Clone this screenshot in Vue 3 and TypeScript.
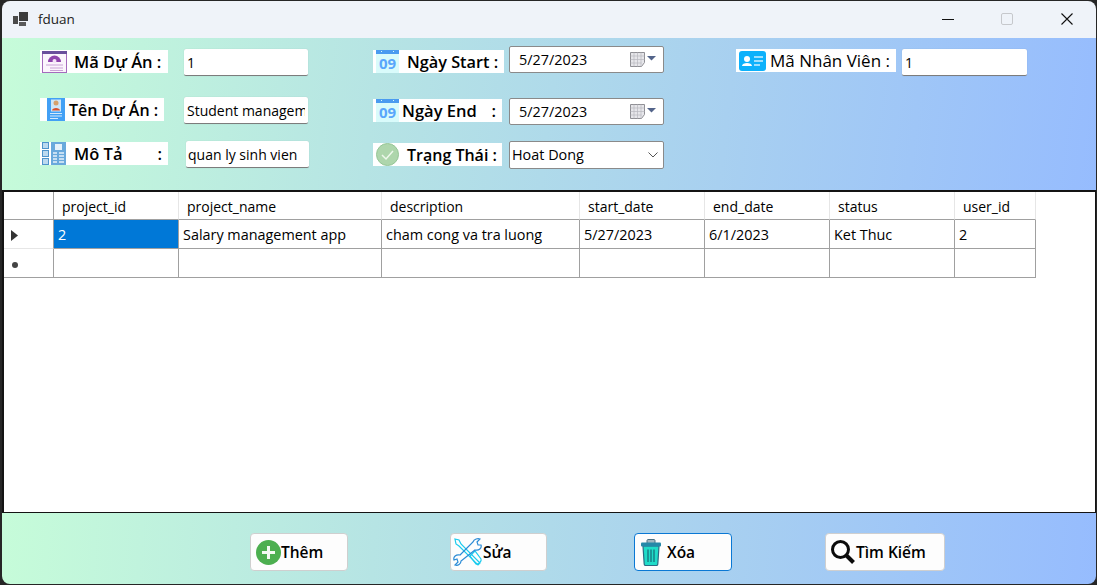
<template>
  <div class="window">
    <div class="shell">
      <div class="titlebar">
        <svg class="app-icon" width="16" height="16" viewBox="0 0 16 16">
          <rect x="0" y="5" width="5" height="8" fill="#4a4a4a" />
          <rect x="6" y="1" width="9" height="9" fill="#3c3c3c" />
          <rect x="6" y="11" width="7" height="4" fill="#5a5a5a" />
        </svg>
        <span class="title">fduan</span>
        <div class="win-controls">
          <svg class="win-btn" width="14" height="14" viewBox="0 0 14 14"><path d="M1 7.500h12" stroke="#111" stroke-width="1" /></svg>
          <svg class="win-btn btn-max" width="14" height="14" viewBox="0 0 14 14"><rect x="1.500" y="1.500" width="11" height="11" rx="1.500" fill="none" stroke="#c6c8cc" /></svg>
          <svg class="win-btn btn-close" width="14" height="14" viewBox="0 0 14 14"><path d="M1.500 1.500l11 11M12.500 1.500l-11 11" stroke="#111" stroke-width="1.100" /></svg>
        </div>
      </div>

      <div class="form-top">
        <div class="col col-a">
          <div class="field">
            <label class="lbl lbl-a1">
              <svg class="ic ic-proj" width="25" height="22" viewBox="0 0 25 22">
                <rect x="0.500" y="0.500" width="24" height="21" fill="#fbf5fc" stroke="#a56bbd" />
                <rect x="0" y="0" width="25" height="3" fill="#6a4f9c" />
                <path d="M6 11a6.500 6.500 0 0 1 13 0z" fill="#8e44ad" />
                <circle cx="12.500" cy="10" r="2" fill="#f3e4f6" />
                <path d="M4 14h17M8 17h13M8 19.500h13" stroke="#c9a3d6" />
              </svg>
              <span class="lbl-text t-a1">Mã Dự Án :</span>
            </label>
            <input class="txt" value="1" readonly />
          </div>
          <div class="field row-a2">
            <label class="lbl lbl-a2">
              <svg class="ic ic-card" width="19" height="23" viewBox="0 0 19 23">
                <rect width="18" height="23" fill="#42a0f5" />
                <rect x="4" y="1.500" width="10" height="12" fill="#cfe6f9" />
                <circle cx="9" cy="5" r="2.500" fill="#d7a06c" />
                <path d="M5 12.500c0-3.500 8-3.500 8 0z" fill="#d8512f" />
                <path d="M3 15.500h12M3 18h12M3 20.500h8" stroke="#d6eafc" />
              </svg>
              <span class="lbl-text">Tên Dự Án :</span>
            </label>
            <input class="txt" value="Student management" readonly />
          </div>
          <div class="field row-a3">
            <label class="lbl lbl-a1">
              <svg class="ic ic-desc" width="24" height="23" viewBox="0 0 24 23">
                <rect x="0.500" y="0.500" width="6" height="6" fill="#bcd9ef" stroke="#4f94cc" />
                <rect x="0.500" y="8.500" width="6" height="6" fill="#bcd9ef" stroke="#4f94cc" />
                <rect x="0.500" y="16.500" width="6" height="6" fill="#bcd9ef" stroke="#4f94cc" />
                <rect x="9" y="0" width="15" height="23" fill="#6aa9dc" />
                <rect x="13" y="2" width="7" height="6" fill="#e6f1fa" />
                <path d="M11 11h4M17 11h5M11 14h4M17 14h5M11 17h4M17 17h5M11 20h4M17 20h5" stroke="#e6f1fa" stroke-width="1.500" />
              </svg>
              <span class="lbl-text t-a3 t-spread"><span>Mô Tả</span><span>:</span></span>
            </label>
            <input class="txt txt-shift" value="quan ly sinh vien" readonly />
          </div>
        </div>

        <div class="col col-b">
          <div class="field-b">
            <label class="lbl lbl-b1">
              <svg class="ic" width="26" height="23" viewBox="0 0 26 23">
                <rect x="3" y="0" width="23" height="23" fill="#d9fbfb" />
                <rect x="3" y="0" width="23" height="4" fill="#4a9bf0" />
                <path d="M8 1.500h1M20 1.500h1" stroke="#d9fbfb" />
                <text x="14.500" y="18.500" class="cal-num">09</text>
              </svg>
              <span class="lbl-text t-b1 t-start">Ngày Start :</span>
            </label>
            <div class="date">
              <span>5/27/2023</span>
              <svg class="cal-btn" width="33" height="17" viewBox="0 0 33 17">
                <path d="M0.500 1.500h14v10l-3 4h-11z" fill="#e6e6ea" stroke="#8f8f94" />
                <path d="M0.500 5h14M0.500 8.500h14M0.500 12h11M4 1.500v14M7.500 1.500v14M11 1.500v14" stroke="#b8b8bf" stroke-width="0.700" />
                <path d="M17 5h9l-4.500 4.500z" fill="#53648a" />
              </svg>
            </div>
          </div>
          <div class="field-b row-b2">
            <label class="lbl lbl-b2">
              <svg class="ic" width="26" height="23" viewBox="0 0 26 23">
                <rect x="3" y="0" width="23" height="23" fill="#d9fbfb" />
                <rect x="3" y="0" width="23" height="4" fill="#4a9bf0" />
                <path d="M8 1.500h1M20 1.500h1" stroke="#d9fbfb" />
                <text x="14.500" y="18.500" class="cal-num">09</text>
              </svg>
              <span class="lbl-text t-spread t-b2"><span>Ngày End</span><span>:</span></span>
            </label>
            <div class="date">
              <span>5/27/2023</span>
              <svg class="cal-btn" width="33" height="17" viewBox="0 0 33 17">
                <path d="M0.500 1.500h14v10l-3 4h-11z" fill="#e6e6ea" stroke="#8f8f94" />
                <path d="M0.500 5h14M0.500 8.500h14M0.500 12h11M4 1.500v14M7.500 1.500v14M11 1.500v14" stroke="#b8b8bf" stroke-width="0.700" />
                <path d="M17 5h9l-4.500 4.500z" fill="#53648a" />
              </svg>
            </div>
          </div>
          <div class="field-b row-b3">
            <label class="lbl lbl-b3">
              <svg class="ic" width="26" height="23" viewBox="0 0 26 23">
                <circle cx="14.500" cy="11.500" r="11" fill="#aed6ac" stroke="#95c596" />
                <path d="M9 12l4 4 7-8" fill="none" stroke="#eef8ec" stroke-width="1.500" />
              </svg>
              <span class="lbl-text t-b1">Trạng Thái :</span>
            </label>
            <div class="combo">
              <span>Hoat Dong</span>
              <svg width="10" height="6" viewBox="0 0 10 6"><path d="M0.500 0.500L5 5l4.500-4.500" fill="none" stroke="#555" /></svg>
            </div>
          </div>
        </div>

        <div class="col col-c">
          <div class="field-c">
            <label class="lbl lbl-c">
              <svg class="ic" width="27" height="20" viewBox="0 0 27 20">
                <rect width="27" height="20" rx="3" fill="#0db1fb" />
                <circle cx="8" cy="8" r="3" fill="#fff" />
                <path d="M3 15c0-4 10-4 10 0z" fill="#fff" />
                <path d="M15 6h9M15 10h9M15 14h6" stroke="#cdeefe" stroke-width="1.500" />
              </svg>
              <span class="lbl-text">Mã Nhân Viên :</span>
            </label>
            <input class="txt txt-c" value="1" readonly />
          </div>
        </div>
      </div>

      <div class="grid">
        <div class="grid-row head">
          <div class="cell corner"></div>
          <div v-for="col in columns" :key="col" class="cell">{{ col }}</div>
        </div>
        <div class="grid-row body">
          <div class="cell rowhead">
            <svg class="row-arrow" width="8" height="11" viewBox="0 0 8 11"><path d="M0 0l7 5.500L0 11z" fill="#333" /></svg>
          </div>
          <div
            v-for="(val, i) in row"
            :key="i"
            class="cell"
            :class="{ selected: i === 0 }"
          >{{ val }}</div>
        </div>
        <div class="grid-row body">
          <div class="cell rowhead">
            <span class="new-dot"></span>
          </div>
          <div v-for="col in columns" :key="col" class="cell"></div>
        </div>
      </div>

      <div class="form-bottom">
        <button class="btn btn-add">
          <svg width="25" height="25" viewBox="0 0 25 25">
            <circle cx="12.500" cy="12.500" r="12.500" fill="#4caf50" />
            <path d="M12.500 6v13M6 12.500h13" stroke="#f2faf2" stroke-width="3" />
          </svg>
          <span>Thêm</span>
        </button>
        <button class="btn btn-edit">
          <svg width="30" height="30" viewBox="0 0 30 30" fill="none">
            <path d="M2 2l4 1 2 4 19 19-2 2L6 9 3 7z" stroke="#19cbee" stroke-width="1.200" />
            <path d="M17 19l5-5 6 8c1 2-3 6-5 5z" stroke="#19cbee" stroke-width="1.200" />
            <path d="M20 5c1-3 5-4 7-3l-3 3 1 3 3 0c1 3-2 6-6 5L8 24c0 3-3 5-6 4l3-3-1-3-3 1c-1-3 2-6 6-5z" stroke="#2b8bd6" stroke-width="1.200" />
          </svg>
          <span>Sửa</span>
        </button>
        <button class="btn btn-del">
          <svg width="20" height="27" viewBox="0 0 20 27">
            <path d="M6 4V1.500c0-.5.500-1 1-1h6c.5 0 1 .5 1 1V4" fill="#9fb6c0" stroke="#4a6f80" />
            <path d="M2 7h16l-1.200 18c0 1-.8 1.500-1.500 1.500H4.700c-.7 0-1.500-.5-1.500-1.500z" fill="#1fdcc8" stroke="#2b6a82" stroke-width="1.200" />
            <rect x="0" y="3.500" width="20" height="4" rx="1" fill="#2488a8" />
            <path d="M7 10.500v12.500M10 10.500v12.500M13 10.500v12.500" stroke="#156a78" stroke-width="1.200" />
          </svg>
          <span>Xóa</span>
        </button>
        <button class="btn btn-find">
          <svg width="24" height="24" viewBox="0 0 24 24" fill="none">
            <circle cx="9.500" cy="9.500" r="8" stroke="#0a0a0a" stroke-width="3" />
            <path d="M15.500 15.500l7 7" stroke="#0a0a0a" stroke-width="4" />
          </svg>
          <span>Tìm Kiếm</span>
        </button>
      </div>
    </div>
  </div>
</template>

<script setup lang="ts">
const columns: string[] = [
  'project_id',
  'project_name',
  'description',
  'start_date',
  'end_date',
  'status',
  'user_id'
]

const row: string[] = [
  '2',
  'Salary management app',
  'cham cong va tra luong',
  '5/27/2023',
  '6/1/2023',
  'Ket Thuc',
  '2'
]
</script>

<style scoped>
.window {
  width: 1097px;
  height: 585px;
  box-sizing: border-box;
  padding: 1px 1px 1px 2px;
  background: #262626;
  font-family: "Open Sans", "Noto Sans", sans-serif;
  font-size: 14.4px;
  color: #000;
}

.shell {
  height: 100%;
  display: flex;
  flex-direction: column;
  border-radius: 8px;
  overflow: hidden;
}

.titlebar {
  height: 37px;
  flex-shrink: 0;
  display: flex;
  align-items: center;
  background: #eff3f9;
  padding-left: 11px;
}

.app-icon {
  margin-right: 9px;
  margin-top: -2px;
}

.title {
  font-size: 13.5px;
  margin-top: -1px;
  color: #1c1c1c;
}

.win-controls {
  margin-left: auto;
  display: flex;
  align-items: center;
  margin-right: 22px;
  margin-top: -1px;
}

.btn-max {
  margin-left: 45px;
}

.btn-close {
  margin-left: 46px;
}

.form-top {
  height: 152px;
  flex-shrink: 0;
  display: flex;
  padding-left: 38px;
  background: linear-gradient(97deg, #c6fcd9 0%, #b6e4e4 34%, #a8d0f0 66%, #96bcfe 100%);
}

.col-a {
  width: 333px;
  padding-top: 11px;
}

.col-b {
  width: 363px;
  padding-top: 8px;
}

.col-c {
  padding-top: 11px;
}

.field {
  display: grid;
  grid-template-columns: 144px 124px;
  height: 27px;
}

.row-a2 {
  margin-top: 21px;
}

.row-a3 {
  margin-top: 17px;
}

.field-b {
  display: grid;
  grid-template-columns: 136px 155px;
  height: 27px;
}

.row-b2 {
  margin-top: 25px;
}

.row-b3 {
  margin-top: 16px;
  height: 28px;
}

.field-c {
  display: grid;
  grid-template-columns: 166px 125px;
  height: 27px;
}

.lbl {
  height: 23px;
  background: #fff;
  display: flex;
  align-items: center;
  font-size: 16px;
  font-weight: 600;
  white-space: nowrap;
  overflow: hidden;
}

.lbl-a1 {
  width: 128px;
  margin-top: 1px;
}

.lbl-a2 {
  width: 124px;
  margin-top: 1px;
}

.lbl-b1 {
  width: 131px;
  margin-top: 4px;
}

.lbl-b2 {
  width: 129px;
  margin-top: 1px;
}

.lbl-b3 {
  width: 129px;
  margin-top: 2px;
}

.lbl-c {
  width: 160px;
  font-weight: 500;
  font-size: 17px;
}

.ic {
  flex-shrink: 0;
}

.ic-proj {
  margin-left: 2px;
}

.ic-card {
  margin-left: 7px;
  margin-right: 3px;
}

.ic-desc {
  margin-left: 2px;
}

.lbl-c .ic {
  margin-left: 3px;
  margin-right: 4px;
}

.lbl-text {
  display: block;
}

.t-a1 {
  margin-left: 7px;
  font-size: 16.5px;
}

.t-a3 {
  margin-left: 8px;
  font-size: 16.5px;
}

.t-b1 {
  margin-left: 8px;
}

.t-start {
  font-size: 16.3px;
}

.t-spread {
  display: flex;
  justify-content: space-between;
  width: 88px;
}

.t-b2 {
  width: 94px;
  margin-left: 3px;
  font-size: 16.5px;
}

.txt {
  box-sizing: border-box;
  width: 124px;
  height: 27px;
  border: 0;
  border-bottom: 1px solid #7c7c7c;
  border-radius: 2px;
  padding: 1px 3px 0 3px;
  background: #fff;
  font-family: inherit;
  font-size: 14px;
  color: #000;
  outline: none;
  box-shadow: 0 0 1px rgba(0, 0, 0, 0.2);
}

.txt-shift {
  margin-left: 2px;
  width: 123px;
  padding-left: 2px;
}

.txt-c {
  width: 125px;
}

.date,
.combo {
  box-sizing: border-box;
  width: 155px;
  height: 27px;
  border: 1px solid #8a8a8a;
  border-radius: 2px;
  background: #fff;
  display: flex;
  align-items: center;
  justify-content: space-between;
}

.date {
  padding-left: 9px;
}

.combo {
  height: 28px;
  padding: 0 5px 2px 2px;
}

.combo svg {
  margin-top: 2px;
}

.cal-num {
  font-family: "Open Sans", sans-serif;
  font-size: 15px;
  font-weight: 700;
  fill: #5aa7fb;
  text-anchor: middle;
}

.grid {
  flex: 1;
  min-height: 0;
  background: #fff;
  border: 2px solid #141414;
  border-right-width: 1px;
  border-bottom-width: 1px;
}

.grid-row {
  display: grid;
  grid-template-columns: 50px 125px 203px 198px 125px 125px 125px 81px;
  width: max-content;
}

.cell {
  box-sizing: border-box;
  border-right: 1px solid #a0a0a0;
  border-bottom: 1px solid #a0a0a0;
  white-space: nowrap;
  overflow: hidden;
}

.head {
  height: 28px;
  font-size: 14px;
}

.head .cell {
  padding: 5px 0 0 8px;
  border-right-color: #e6e6e6;
}

.head .corner {
  border-right-color: #a0a0a0;
}

.body {
  height: 29px;
}

.body .cell {
  padding: 5px 0 0 4px;
}

.body .selected {
  background: #0078d7;
  color: #fff;
}

.body .rowhead {
  display: flex;
  align-items: center;
  padding: 0 0 0 7px;
  border-bottom-color: #e6e6e6;
}

.body:last-child .rowhead {
  border-bottom-color: #a0a0a0;
}

.row-arrow {
  margin-top: 2px;
}

.new-dot {
  width: 6px;
  height: 6px;
  margin: 3px 0 0 1px;
  border-radius: 50%;
  background: #444;
}

.form-bottom {
  height: 71px;
  flex-shrink: 0;
  box-sizing: border-box;
  display: flex;
  padding: 20px 0 0 248px;
  background: linear-gradient(93deg, #c6fcd9 0%, #b6e4e4 34%, #a8d0f0 66%, #96bcfe 100%);
}

.btn {
  box-sizing: border-box;
  height: 38px;
  display: flex;
  align-items: center;
  padding: 0;
  border: 1px solid #cfcfcf;
  border-radius: 4px;
  background: #fdfdfd;
  font-family: inherit;
  font-size: 15.5px;
  font-weight: 600;
  color: #000;
}

.btn-add {
  width: 98px;
  padding-left: 5px;
}

.btn-edit {
  width: 97px;
  margin-left: 102px;
  padding-left: 2px;
}

.btn-del {
  width: 98px;
  margin-left: 87px;
  padding-left: 6px;
  border-color: #0a78d4;
}

.btn-del span {
  margin-left: 6px;
}

.btn-find {
  width: 120px;
  margin-left: 93px;
  padding-left: 5px;
}

.btn-find span {
  margin-left: 1px;
}
</style>

<style>
html,
body {
  margin: 0;
  background: #262626;
}
</style>
